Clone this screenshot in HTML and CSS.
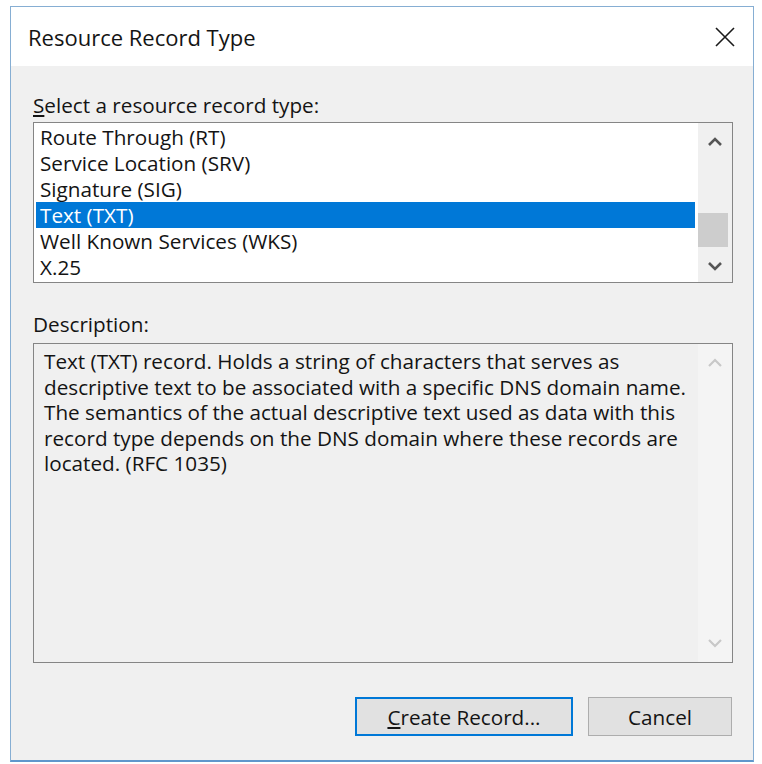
FILE: index.html
```html
<!DOCTYPE html>
<html lang="en">
<head>
    <meta charset="UTF-8">
    <meta name="viewport" content="width=device-width, initial-scale=1.0">
    <title>Resource Record Type</title>
    <link rel="stylesheet" href="styles.css">
</head>
<body>
    <div class="window">
        <div class="titlebar">
            <span class="title">Resource Record Type</span>
            <svg class="close" width="20" height="20" viewBox="0 0 20 20">
                <path d="M1 1 L19 19 M19 1 L1 19" stroke="#1a1a1a" stroke-width="1.6" fill="none"/>
            </svg>
        </div>
        <div class="client">
            <div class="label"><u>S</u>elect a resource record type:</div>
            <div class="listbox">
                <div class="items">
                    <div class="item">Route Through (RT)</div>
                    <div class="item">Service Location (SRV)</div>
                    <div class="item">Signature (SIG)</div>
                    <div class="item selected">Text (TXT)</div>
                    <div class="item">Well Known Services (WKS)</div>
                    <div class="item">X.25</div>
                </div>
                <div class="scrollbar">
                    <div class="arrow">
                        <svg width="16" height="10" viewBox="0 0 16 10"><path d="M2 8 L8 2 L14 8" stroke="#555" stroke-width="2.6" fill="none"/></svg>
                    </div>
                    <div class="track"><div class="thumb"></div></div>
                    <div class="arrow">
                        <svg width="16" height="10" viewBox="0 0 16 10"><path d="M2 2 L8 8 L14 2" stroke="#555" stroke-width="2.6" fill="none"/></svg>
                    </div>
                </div>
            </div>
            <div class="label desc-label">Description:</div>
            <div class="descbox">
                <div class="desc-text">
                    Text (TXT) record. Holds a string of characters that serves as<br>
                    descriptive text to be associated with a specific DNS domain name.<br>
                    The semantics of the actual descriptive text used as data with this<br>
                    record type depends on the DNS domain where these records are<br>
                    located. (RFC 1035)
                </div>
                <div class="scrollbar disabled">
                    <div class="arrow">
                        <svg width="16" height="10" viewBox="0 0 16 10"><path d="M2 8 L8 2 L14 8" stroke="#c8c8c8" stroke-width="2.2" fill="none"/></svg>
                    </div>
                    <div class="track"></div>
                    <div class="arrow">
                        <svg width="16" height="10" viewBox="0 0 16 10"><path d="M2 2 L8 8 L14 2" stroke="#c8c8c8" stroke-width="2.2" fill="none"/></svg>
                    </div>
                </div>
            </div>
            <div class="buttons">
                <button class="btn default"><u>C</u>reate Record...</button>
                <button class="btn">Cancel</button>
            </div>
        </div>
    </div>
</body>
</html>
```

FILE: styles.css
```css
body {
    margin: 0;
    background-color: white;
    font-family: 'Open Sans', 'Noto Sans', sans-serif;
    font-size: 20.7px;
    color: #141414;
}
.window {
    margin: 6px 0 0 10px;
    width: 744px;
    height: 756px;
    box-sizing: border-box;
    border: 1px solid #86aed3;
    border-bottom: 2px solid #5f97cc;
    display: flex;
    flex-direction: column;
}
.titlebar {
    height: 59px;
    flex: none;
    background-color: white;
    display: flex;
    align-items: center;
    justify-content: space-between;
    padding: 0 18px 0 17px;
}
.title {
    font-size: 22px;
}
.client {
    flex: 1;
    background-color: #f0f0f0;
    padding: 27px 0 0 22px;
}
.label {
    height: 24px;
    line-height: 24px;
    margin-bottom: 5px;
}
.desc-label {
    margin-top: 29px;
    margin-bottom: 7px;
}
.listbox {
    width: 700px;
    height: 161px;
    box-sizing: border-box;
    border: 1px solid #858585;
    background-color: white;
    display: flex;
}
.items {
    flex: 1;
    padding: 1px 3px 0 2px;
}
.item {
    height: 26px;
    line-height: 27px;
    padding-left: 4px;
    white-space: nowrap;
}
.item.selected {
    background-color: #0078d7;
    color: white;
}
.scrollbar {
    width: 34px;
    flex: none;
    background-color: #f0f0f0;
    display: flex;
    flex-direction: column;
}
.scrollbar.disabled {
    background-color: #f4f4f4;
}
.arrow {
    height: 38px;
    display: flex;
    align-items: center;
    justify-content: center;
    flex: none;
}
.track {
    flex: 1;
}
.thumb {
    margin: 52px 4px 0 0;
    height: 34px;
    background-color: #cdcdcd;
}
.descbox {
    width: 700px;
    height: 320px;
    box-sizing: border-box;
    border: 1px solid #858585;
    background-color: #f0f0f0;
    display: flex;
}
.desc-text {
    flex: 1;
    padding: 5px 10px;
    line-height: 25.5px;
    white-space: nowrap;
}
.buttons {
    width: 700px;
    margin-top: 34px;
    display: flex;
    justify-content: flex-end;
    gap: 15px;
}
.btn {
    height: 39px;
    box-sizing: border-box;
    border: 1px solid #adadad;
    background-color: #e1e1e1;
    font-family: inherit;
    font-size: 20.7px;
    color: #141414;
    padding: 0;
    width: 144px;
    margin-right: 1px;
}
.btn.default {
    width: 218px;
    border: 2px solid #0078d7;
    margin-right: 0;
}
```
